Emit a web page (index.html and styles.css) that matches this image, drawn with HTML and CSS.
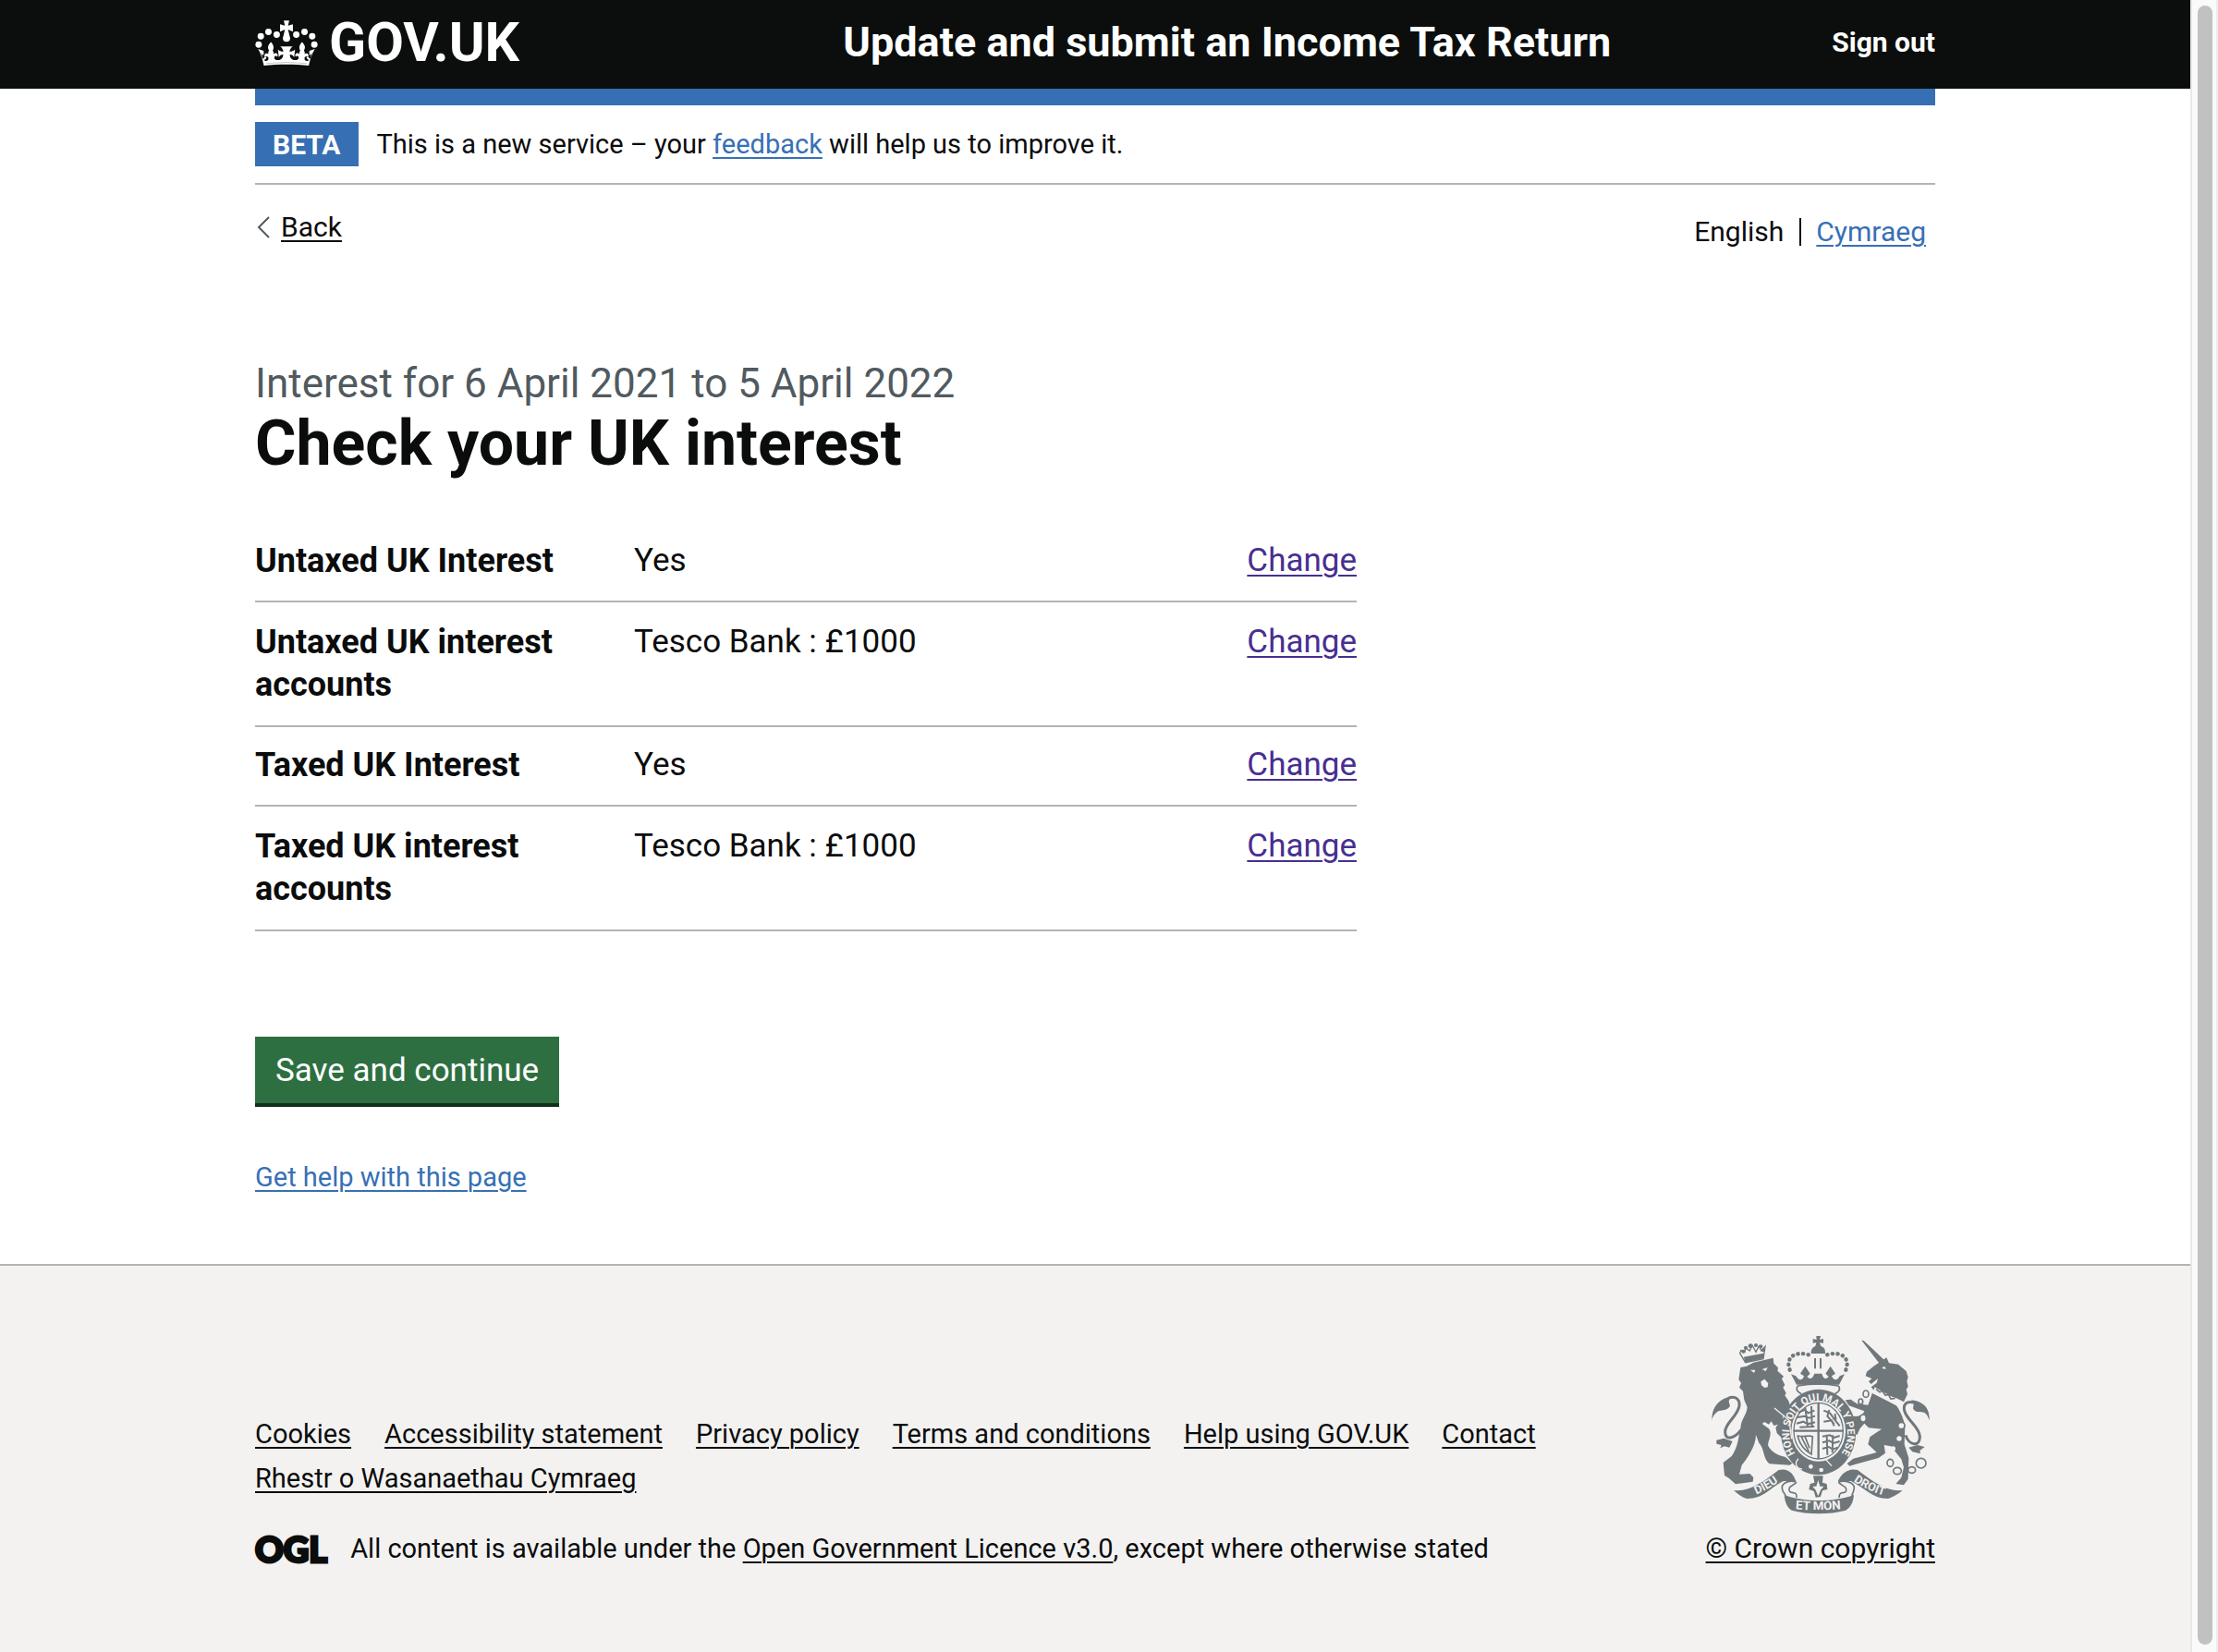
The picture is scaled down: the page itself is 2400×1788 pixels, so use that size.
FILE: index.html
```html
<!DOCTYPE html>
<html lang="en">
<head>
<meta charset="utf-8">
<title>Check your UK interest - Update and submit an Income Tax Return - GOV.UK</title>
<meta name="viewport" content="width=device-width, initial-scale=1">
<link rel="stylesheet" href="styles.css">
</head>
<body>
<div class="page">
  <header class="header">
    <div class="container header__inner">
      <a class="header__logo" href="#">
        <svg class="header__crown" viewBox="48 62 204 148" aria-hidden="true">
          <g fill="#fff">
            <circle cx="59" cy="141" r="10.5"/><circle cx="66" cy="114" r="10.5"/><circle cx="91" cy="100" r="10.5"/><circle cx="118" cy="109" r="10.5"/>
            <circle cx="241" cy="141" r="10.5"/><circle cx="234" cy="114" r="10.5"/><circle cx="209" cy="100" r="10.5"/><circle cx="182" cy="109" r="10.5"/>
            <path d="M141 63h18l-4 16 16-4v24l-16-7 7 28a12 12 0 1 1-24 0l7-28-16 7V75l16 4z"/>
            <path d="M57 156l18 6c1 7 1 10-1 15-3-2-5-5-7-10l5 21c5-5 8-6 13-6-2 6-4 8-9 10 8 6 17 1 15-7-2-6-8-7-12-2-4-10 4-16 12-11-2-5 0-8 2-11-7-12-2-19 6-28 8 8 12 17 6 28 2 3 4 6 2 11 8-6 18-1 13 9-4-4-9-3-10 3 0 9 15 9 20 6 8-4 9-10 9-16-7 0-11 3-14 9l-3-25c7 5 13 7 18 6 0-8-10-17-10-17h40s-10 9-10 17c5 1 11-1 18-6l-3 25c-3-6-7-9-14-9 0 6 1 12 9 16 5 3 20 3 20-6-1-6-6-7-10-3-5-10 5-15 13-9-2-5 0-8 2-11-6-11-2-20 6-28 8 9 13 16 6 28 2 3 4 6 2 11 8-5 16 1 12 11-4-5-10-4-12 2-2 8 7 13 15 7-5-2-7-4-9-10 5 0 8 1 13 6l5-21c-2 5-4 8-7 10-2-5-2-8-1-15l18-6c-9 15-15 30-20 54-46-5-101-5-147 0-5-24-10-39-19-54z"/>
          </g>
          <path d="M84 203q66-7 132 0" fill="none" stroke="#aaa" stroke-width="2"/>
        </svg>
        <span class="header__logotype">GOV.UK</span>
      </a>
      <a class="header__service" href="#">Update and submit an Income Tax Return</a>
      <a class="header__signout" href="#">Sign out</a>
    </div>
  </header>

  <div class="container">
    <div class="accent-bar"></div>
    <div class="phase-banner">
      <strong class="phase-banner__tag">BETA</strong>
      <span>This is a new service – your <a class="link" href="#">feedback</a> will help us to improve it.</span>
    </div>
    <div class="top-nav">
      <a class="back-link" href="#">
        <svg class="back-link__arrow" viewBox="0 0 14 24" aria-hidden="true"><path d="M13 1L2 12l11 11" fill="none" stroke="#505a5f" stroke-width="2"/></svg>
        <span class="back-link__text">Back</span>
      </a>
      <nav class="language" aria-label="Language switcher">
        <span class="language__current">English</span>
        <a class="link" href="#" lang="cy">Cymraeg</a>
      </nav>
    </div>

    <main class="main">
      <span class="caption">Interest for 6 April 2021 to 5 April 2022</span>
      <h1 class="heading">Check your UK interest</h1>
      <dl class="summary">
        <div class="summary__row">
          <dt class="summary__key">Untaxed UK Interest</dt>
          <dd class="summary__value">Yes</dd>
          <dd class="summary__action"><a class="link link--visited" href="#">Change</a></dd>
        </div>
        <div class="summary__row summary__row--accounts">
          <dt class="summary__key">Untaxed UK interest accounts</dt>
          <dd class="summary__value">Tesco Bank : £1000</dd>
          <dd class="summary__action"><a class="link link--visited" href="#">Change</a></dd>
        </div>
        <div class="summary__row">
          <dt class="summary__key">Taxed UK Interest</dt>
          <dd class="summary__value">Yes</dd>
          <dd class="summary__action"><a class="link link--visited" href="#">Change</a></dd>
        </div>
        <div class="summary__row summary__row--accounts">
          <dt class="summary__key">Taxed UK interest accounts</dt>
          <dd class="summary__value">Tesco Bank : £1000</dd>
          <dd class="summary__action"><a class="link link--visited" href="#">Change</a></dd>
        </div>
      </dl>
      <button class="button" type="submit">Save and continue</button>
      <div class="help"><a class="link" href="#">Get help with this page</a></div>
    </main>
  </div>

  <footer class="footer">
    <div class="container footer__inner">
      <div class="footer__main">
        <ul class="footer__links">
          <li><a href="#">Cookies</a></li>
          <li><a href="#">Accessibility statement</a></li>
          <li><a href="#">Privacy policy</a></li>
          <li><a href="#">Terms and conditions</a></li>
          <li><a href="#">Help using GOV.UK</a></li>
          <li><a href="#">Contact</a></li>
          <li><a href="#" lang="cy">Rhestr o Wasanaethau Cymraeg</a></li>
        </ul>
        <div class="footer__licence">
          <span class="footer__ogl">OGL</span>
          <span>All content is available under the <a href="#">Open Government Licence v3.0</a>, except where otherwise stated</span>
        </div>
      </div>
      <a class="footer__copyright" href="#">
        <svg class="footer__crest" viewBox="96 78 708 576" aria-hidden="true">
          <g fill="#6f777b">
            <!-- lion -->
            <path d="M190 180l20-4 22-12 64-15 2 18 14 14-2 10 20 18-6 8 10 20-6 8 10 18-4 8 12 18 6 18-26 34 6 30 30 36-10 10-12-8-6 8-12-10-14-14-4-18 8-10-14 4-8-14-8 10-14-8-8 6 22 16c14 20-6 40-2 56 14 24 34 30 56 36l22 20-8 6-66-4c-22-18-16-50-34-68l-10-26c0 36-28 76-46 98l-8 30 34-2 12 12-2 14-56 8-22-20-14-8-4-42 28-22c20-30 20-54 28-90 2-30 20-42 22-68l-10-24-4-28-12-12 6-14-8-12z"/>
            <path d="M192 124l-4 10 18 30 58-12 6-40-12 14-8-16-10 20-12-22-8 18-14-10-2 14z" fill="none" stroke="#6f777b" stroke-width="4"/>
            <circle cx="199" cy="128" r="6"/><circle cx="207" cy="116" r="6"/><circle cx="222" cy="110" r="7"/><circle cx="240" cy="108" r="6"/><circle cx="256" cy="112" r="6"/><circle cx="264" cy="124" r="6"/>
            <path d="M200 146l64-12 2 16-60 14z"/>
            <path d="M96 352l2-16c2-24 22-56 58-60l-4 14 4 16c-12 16-26 12-38 16-10 6-16 14-22 30zM112 416l24-6 28 10-10 20-16-4-14 6 4-10-16-4z"/>
            <path d="M150 280c24-10 38 4 36 24-4 34-48 58-46 86 0 30 32 20 52-8" fill="none" stroke="#6f777b" stroke-width="9"/>
            <!-- unicorn -->
            <path d="M583 92l7 1 66 62-14 14zM596 208l4-14 22-18 18-12 24-16 8 18 30 4 26 22 6 20-4 12 4 18-6 10 4 14-12 26-24-12-72-24-10-12 18-14 4-14-22 18-8-8 10-10z"/>
            <path d="M618 262l78 42c8 10 22 36 28 66l-2 60 14 44-2 68-14 20-26-4 18-20 8-34-8-26-34-42-22-4 4 26-22 16-74 20-20 6-8-8 20-16 76-20-28-26 6-24 38-26-42-4-14-14-14 16-10 22-40-36 4-24 40-2 14-6 6-10-50-18-12-18 18-2 20 14 36 4z"/>
            <path d="M804 352l-2-16c-2-24-18-46-58-50l8 14-2 14c12 16 24 8 36 12 10 6 12 14 18 26zM788 438l-24-6-28 8 12 14 26 6-2-10z"/>
            <path d="M752 294c-24-6-34 6-30 26 6 30 50 54 50 84 2 36-36 30-46-4" fill="none" stroke="#6f777b" stroke-width="9"/>
            <!-- crown above the shield -->
            <path d="M436 78h14l-3 12 12-3v14l-12-2 4 12c12 4 14 10 14 24h-46c0-14 4-20 14-24l3-12-11 2V87l12 3z"/>
            <path d="M354 202l16 6c10 18 22 14 26 0l-12-8 16-24 16 24-10 10c8 10 18 8 24-10h24c4 18 14 20 22 10l-10-10 16-24 16 24-12 8c6 14 18 18 26 0l16-6-18 34h-138z"/>
            <path d="M350 188c-18-46 28-66 74-44M532 188c18-46-28-66-74-44" fill="none" stroke="#6f777b" stroke-width="13" stroke-linecap="round" stroke-dasharray="1 16"/>
            <path d="M432 150v34m18-34v34" stroke="#6f777b" stroke-width="6"/>
            <path d="M376 240c42-8 90-8 132 0M376 240c-10 14 4 22 12 26m120-26c10 14-4 22-12 26" fill="none" stroke="#6f777b" stroke-width="5"/>
            <!-- garter and shield -->
            <ellipse cx="443" cy="390" rx="122" ry="139"/>
          </g>
          <g fill="#f3f2f1">
            <path d="M222 188l16 0-4 10zM260 186l18-6-6 12zM256 226l12-8 12 14-2 12-10 2-10-8zM648 182l10-6 4 10zM626 244l84 48-8 14-84-42z"/>
            <ellipse cx="443" cy="386" rx="88" ry="99"/>
            <circle cx="418" cy="502" r="7"/><circle cx="452" cy="513" r="7"/>
            <circle cx="685" cy="444" r="8"/><circle cx="705" cy="411" r="8"/>
          </g>
          <g fill="none" stroke="#6f777b">
            <ellipse cx="443" cy="386" rx="80" ry="91" stroke-width="4"/>
            <path d="M443 296v180M362 386h162" stroke-width="7"/>
            <path d="M378 326l20-8 12 10 20-8M374 342l24-4 14 6 20-6M372 362l22-6 14 8 24-6M382 374l48-2M400 310l8 60M420 306l2 64M456 404l24-4 14 8 18-6M456 424l22-6 14 8 20-6M456 444l20-6 14 8 16-6M470 398l2 66M490 400l-2 56" stroke-width="6"/>
            <path d="M460 320l20 8 16 22 16 20M478 318l-6 20 22 26M460 356l26-4 8 18M496 330l4 20" stroke-width="6"/>
            <path d="M376 402c20 6 30-4 48 2l-4 58c-16-8-34-24-44-56zM388 406l24 48M400 406l14 36" stroke-width="5"/>
          </g>
          <g fill="none" stroke="#f3f2f1" stroke-width="4">
            <path d="M378 476c-14 14-8 34 12 34M486 500l-20-22"/>
            <path d="M300 312l48 40 8 60"/>
          </g>
          <path d="M630 250l12 10 8-4 10 14 10-2 8 14 14-2" fill="none" stroke="#6f777b" stroke-width="5"/>
          <g fill="#f3f2f1" stroke="#6f777b" stroke-width="5">
            <ellipse cx="597" cy="266" rx="9" ry="11"/><ellipse cx="580" cy="291" rx="7" ry="9"/><ellipse cx="588" cy="345" rx="10" ry="12"/><circle cx="712" cy="369" r="11"/>
            <ellipse cx="676" cy="490" rx="10" ry="12"/><ellipse cx="699" cy="516" rx="13" ry="11"/><ellipse cx="746" cy="513" rx="12" ry="10"/><circle cx="776" cy="491" r="16"/>
          </g>
          <!-- motto ribbon -->
          <g fill="#6f777b">
            <path d="M168 579c54 6 104-34 146-66 34-8 50 16 56 38l-40-2c-44 20-64 58-120 57-16-4-30-16-42-27z"/>
            <path d="M716 579c-54 6-104-34-146-66-34-8-56 16-64 38l42-2c44 20 70 58 120 57 16-4 36-16 48-27z"/>
            <path d="M332 594c66 24 158 24 226 0-2 24-10 40-26 50-54 14-124 14-176 0-16-10-22-28-24-50z"/>
            <path d="M426 532h32l-2 22 14 4 2 18-16 4-6 20-16 2-6-20-16-6 4-18 14-4z"/>
          </g>
          <path d="M442 546l6 20 12 0-10 12-8 20-8-20-10-12 12 0z" fill="#f3f2f1"/>
          <path d="M370 551c-30-6-50 8-44 26 2 10 10 14 10 20M372 553c-16 14-30 14-22 30 8 8 24-2 22 20M508 551c34-6 56 8 50 26-2 10-6 14-6 20M508 553c14 14 30 14 24 30-8 8-22-2-22 20" fill="none" stroke="#6f777b" stroke-width="5"/>
          <defs>
            <path id="garter" d="M377 471A94 107 0 1 1 509 471"/>
            <path id="dieu" d="M226 598Q278 580 326 542"/>
            <path id="droit" d="M546 542Q600 582 668 599"/>
            <path id="etmon" d="M346 638Q442 648 538 638"/>
          </defs>
          <g class="footer__motto" text-anchor="middle">
            <text><textPath href="#garter" startOffset="50%">HONI SOIT QUI MAL Y PENSE</textPath></text>
            <text class="footer__motto-word"><textPath href="#dieu" startOffset="50%">DIEU</textPath></text>
            <text class="footer__motto-word"><textPath href="#droit" startOffset="50%">DROIT</textPath></text>
            <text class="footer__motto-base"><textPath href="#etmon" startOffset="50%">ET MON</textPath></text>
          </g>
        </svg>
        <span>© Crown copyright</span>
      </a>
    </div>
  </footer>
</div>
<div class="scrollbar" aria-hidden="true"><div class="scrollbar__thumb"></div></div>
</body>
</html>
```

FILE: styles.css
```css
* {
  box-sizing: border-box;
}

body {
  display: flex;
  min-height: 100vh;
  margin: 0;
  background: #fff;
  color: #0b0c0c;
  font-family: Roboto, "Liberation Sans", sans-serif;
  font-size: 29px;
  line-height: 40px;
}

a {
  color: inherit;
  text-decoration-thickness: 2px;
  text-underline-offset: 4px;
}

.page {
  display: flex;
  flex: 1;
  flex-direction: column;
  min-width: 0;
}

.container {
  width: calc(100% - 60px);
  max-width: 1818px;
  margin: 0 auto;
}

.link {
  color: #3770b4;
}

.link--visited {
  color: #472f91;
}

/* Header */
.header {
  background: #0b0e0c;
  color: #fff;
  font-weight: 700;
}

.header a {
  text-decoration: none;
}

.header__inner {
  display: grid;
  grid-template-columns: 35% auto 1fr;
  align-items: center;
  height: 96px;
  padding-bottom: 4px;
}

.header__logo {
  display: flex;
  align-items: center;
  gap: 12px;
}

.header__crown {
  width: 68px;
  height: 49px;
}

.header__logotype {
  font-size: 59px;
}

.header__service {
  font-size: 45px;
}

.header__signout {
  justify-self: end;
  font-size: 30px;
}

/* Phase banner and navigation */
.accent-bar {
  height: 18px;
  background: #366fb3;
}

.phase-banner {
  display: flex;
  align-items: center;
  gap: 20px;
  padding: 18px 0;
  border-bottom: 2px solid #b3b4b5;
}

.phase-banner__tag {
  padding: 1px 19px 0;
  background: #366fb3;
  color: #fff;
  font-size: 30px;
  line-height: 47px;
}

.top-nav {
  display: flex;
  justify-content: space-between;
  padding-top: 26px;
  font-size: 30px;
}

.back-link {
  display: flex;
  align-items: center;
  gap: 12px;
  height: 40px;
  padding-left: 2px;
  text-decoration: none;
}

.back-link__arrow {
  width: 14px;
  height: 24px;
}

.back-link__text {
  text-decoration: underline;
  text-decoration-thickness: 2px;
  text-underline-offset: 4px;
}

.language {
  display: flex;
  align-items: center;
  padding: 10px 10px 0 0;
  line-height: 30px;
}

.language__current {
  margin-right: 16px;
  padding-right: 17px;
  border-right: 2px solid #0b0c0c;
}

/* Main */
.main {
  max-width: 1192px;
  padding: 124px 0 74px;
}

.caption {
  display: block;
  color: #505a5f;
  font-size: 44px;
  line-height: 50px;
}

.heading {
  margin: 0 0 46px;
  font-size: 68px;
  font-weight: 700;
  line-height: 80px;
}

.summary {
  margin: 0 0 114px;
  font-size: 35px;
  line-height: 46px;
}

.summary__row {
  display: grid;
  grid-template-columns: 350px 1fr auto;
  column-gap: 60px;
  padding: 18px 0 20px;
  border-bottom: 2px solid #b3b4b5;
}

.summary__row--accounts {
  padding: 20px 0 21px;
}

.summary__key {
  font-size: 36px;
  font-weight: 700;
}

.summary__value,
.summary__action {
  margin: 0;
}

.button {
  display: block;
  margin: 0 0 60px;
  padding: 14px 22px 12px;
  border: 0;
  background: #2e6f42;
  box-shadow: 0 4px 0 #122f1c;
  color: #fff;
  font: inherit;
  font-size: 35px;
  line-height: 46px;
}

/* Footer */
.footer {
  flex: 1;
  border-top: 2px solid #b3b4b5;
  background: #f3f2f1;
}

.footer__inner {
  display: flex;
  align-items: flex-end;
  justify-content: space-between;
  padding: 76px 0 80px;
}

.footer__links {
  display: flex;
  flex-wrap: wrap;
  column-gap: 36px;
  max-width: 1500px;
  margin: 0 0 32px;
  padding: 0;
  line-height: 48px;
  list-style: none;
}

.footer__licence {
  display: flex;
  align-items: center;
  gap: 25px;
}

.footer__ogl {
  font-family: Lato, Roboto, sans-serif;
  font-size: 38px;
  font-weight: 900;
  -webkit-text-stroke: 3px currentColor;
}

.footer__copyright {
  display: flex;
  flex-direction: column;
  align-items: center;
  gap: 18px;
  font-size: 30px;
}

.footer__crest {
  width: 236px;
  height: 192px;
  overflow: visible;
}

.footer__motto {
  fill: #f3f2f1;
  font-size: 34px;
  font-weight: 700;
}

.footer__motto-word {
  font-size: 38px;
}

.footer__motto-base {
  font-size: 40px;
}

/* Scroll track at the window edge */
.scrollbar {
  width: 30px;
  padding: 6px 4px 8px 6px;
  border-right: 2px solid #ececec;
  border-left: 2px solid #e8e8e8;
  background: #fafafa;
}

.scrollbar__thumb {
  width: 16px;
  height: 100%;
  border-radius: 8px;
  background: #c1c1c1;
}
```
